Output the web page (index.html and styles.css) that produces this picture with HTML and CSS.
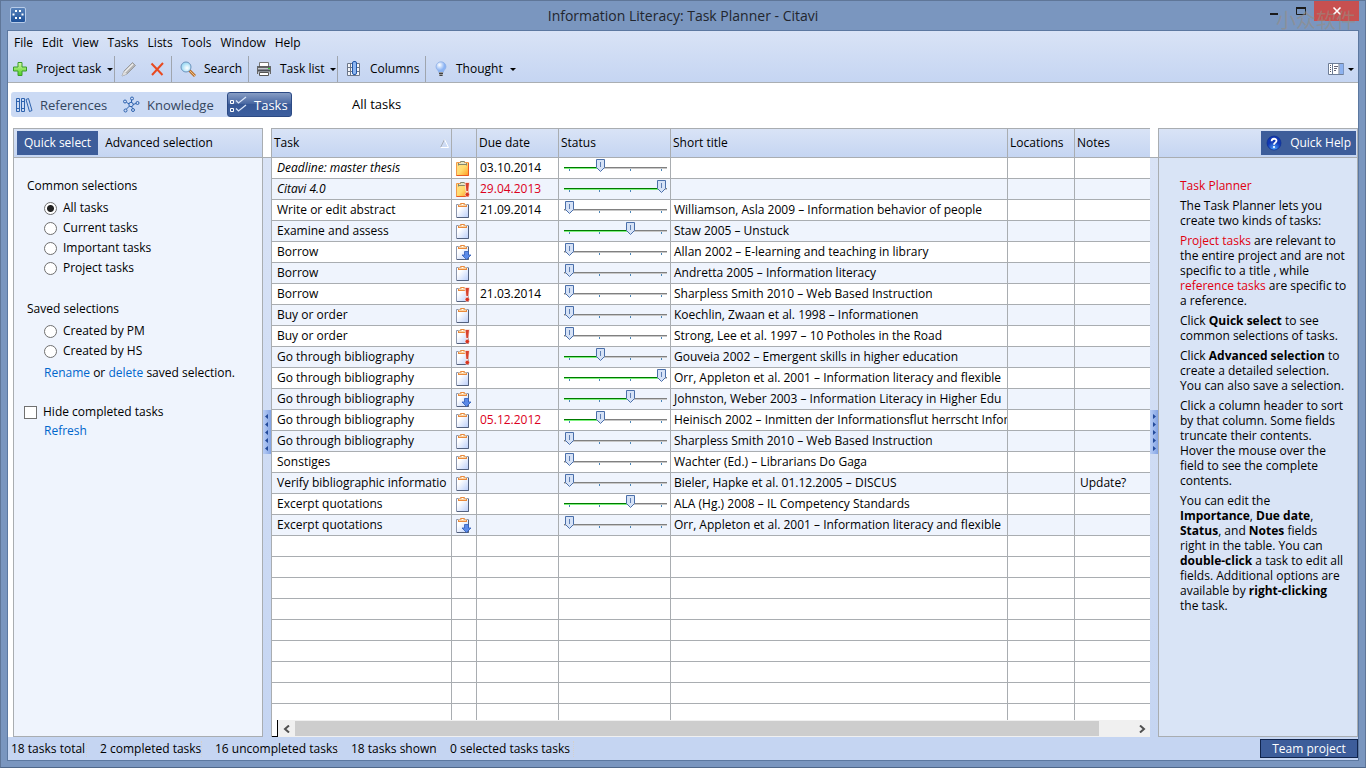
FILE: index.html
```html
<!DOCTYPE html>
<html lang="en">
<head>
<meta charset="utf-8">
<title>Information Literacy: Task Planner - Citavi</title>
<link rel="stylesheet" href="styles.css">
</head>
<body>
<svg class="defs" aria-hidden="true">
  <defs>
    <linearGradient id="paper" x1="0" y1="0" x2="1" y2="1"><stop offset="0.3" stop-color="#fff"/><stop offset="1" stop-color="#b9cdfa"/></linearGradient>
    <linearGradient id="gold" x1="0" y1="0" x2="1" y2="1"><stop offset="0" stop-color="#ffe08a"/><stop offset="0.5" stop-color="#ffdc70"/><stop offset="1" stop-color="#ff9a20"/></linearGradient>
    <linearGradient id="green" x1="0" y1="0" x2="0" y2="1"><stop offset="0" stop-color="#d8f8a8"/><stop offset="1" stop-color="#4cd020"/></linearGradient>
    <radialGradient id="glass" cx="0.6" cy="0.6"><stop offset="0" stop-color="#fff"/><stop offset="1" stop-color="#a4ddf5"/></radialGradient>
    <radialGradient id="bulb" cx="0.35" cy="0.3"><stop offset="0" stop-color="#fff"/><stop offset="1" stop-color="#8cb4f4"/></radialGradient>
    <radialGradient id="ball" cx="0.5" cy="0.9"><stop offset="0" stop-color="#4aa0ff"/><stop offset="1" stop-color="#1238b4"/></radialGradient>
    <linearGradient id="app" x1="0" y1="0" x2="0" y2="1"><stop offset="0" stop-color="#5a84bc"/><stop offset="1" stop-color="#1c4f98"/></linearGradient>
    <g id="i-note">
      <path d="M2.5 2.5h12v13h-12z" fill="url(#paper)" stroke="#8d97ad"/><path d="M14.5 3v12.5H3" fill="none" stroke="#53617e"/>
      <path d="M4 5V2.500h2.500L7 1h3l.5 1.500H13V5z" fill="#fbd3a4"/><path d="M4.500 5V3M12.500 5V3M5 4.500h7M6.500 2.500V1.500h4v1" stroke="#ea8a3c" fill="none"/><path d="M8 2.500h1" stroke="#fff"/>
    </g>
    <g id="i-gold">
      <path d="M2.500 2.500h12v13h-12z" fill="url(#gold)" stroke="#f39a4a"/><path d="M14.500 3v12.500H2.500" fill="none" stroke="#e95a24"/>
      <path d="M4 5V3h2.500L7 1h3l.5 2H13v2z" fill="#e6e4c4"/><path d="M4.500 5.500V3M12.500 5.500V3M5 4.500h7M6.500 2.500V1.500h4v1" stroke="#85866c" fill="none"/>
    </g>
    <g id="i-bang">
      <path d="M11 1.500h4.500l-1 9H12z" fill="#d8412c" stroke="#fff" stroke-width="0.700"/><circle cx="13.300" cy="13.500" r="2.200" fill="#d8341f" stroke="#fff" stroke-width="0.500"/>
    </g>
    <g id="i-down">
      <path d="M10.500 7.500h4V11H17l-4.500 4.500L8 11h2.500z" fill="#5b8ae8" stroke="#2f5cb8" stroke-width="0.800"/>
    </g>
  </defs>
</svg>

<div class="window">
  <header class="titlebar">
    <svg class="app-icon" viewBox="0 0 16 16" aria-hidden="true"><rect x="0.5" y="0.5" width="15" height="15" rx="1.500" fill="url(#app)" stroke="#b7cbe8"/><path d="M5 3h2v2H5zM9 3h2v2H9zM2.500 6.500h2v2h-2zM11.500 6.500h2v2h-2zM5 10h2v2H5zM9 10h2v2H9z" fill="#fff"/></svg>
    <h1 class="title">Information Literacy: Task Planner - Citavi</h1>
    <div class="caption">
      <button class="cap" aria-label="Minimize"><svg viewBox="0 0 12 12"><path d="M2 9h8" stroke="#1b1b1b" stroke-width="2"/></svg></button>
      <button class="cap" aria-label="Maximize"><svg viewBox="0 0 12 12"><path d="M1.500 3v6.500h9V3" fill="none" stroke="#1b1b1b"/><path d="M1 3h10" stroke="#1b1b1b" stroke-width="2"/></svg></button>
      <button class="cap close" aria-label="Close"><svg viewBox="0 0 12 12"><path d="M2.500 2.500l7 7M9.500 2.500l-7 7" stroke="#fff" stroke-width="1.600"/></svg></button>
      <span class="watermark">小众软件</span>
    </div>
  </header>

  <div class="client">
    <div class="bars">
      <nav class="menu">
        <button>File</button><button>Edit</button><button>View</button><button>Tasks</button><button>Lists</button><button>Tools</button><button>Window</button><button>Help</button>
      </nav>
      <div class="toolbar">
        <button class="tool t-project"><svg class="ic" viewBox="0 0 16 16"><path d="M6 1.500h4V6h4.500v4H10v4.500H6V10H1.500V6H6z" fill="url(#green)" stroke="#3a9c28"/></svg><span>Project task</span><i class="caret"></i></button>
        <span class="sep"></span>
        <button class="tool icon-only" aria-label="Edit"><svg class="ic" viewBox="0 0 16 16"><path d="M1 15l2-5L11.500 1.500l3 3L6 13z" fill="#b4b4b4" stroke="#888" stroke-width="0.700"/><path d="M4 11l8-8" stroke="#eee" stroke-width="1.500"/><path d="M1 15l2-5 3 3z" fill="#ddd"/></svg></button>
        <button class="tool icon-only" aria-label="Delete"><svg class="ic" viewBox="0 0 16 16"><path d="M2.500 2.500L13.500 14M14 2L3 14" stroke="#e84a20" stroke-width="2"/></svg></button>
        <span class="sep"></span>
        <button class="tool t-search"><svg class="ic" viewBox="0 0 16 16"><path d="M9 9l6 6" stroke="#b87030" stroke-width="3"/><path d="M9 9l6 6" stroke="#f0c080"/><circle cx="6" cy="6" r="5" fill="url(#glass)" stroke="#6c93bd"/></svg><span>Search</span></button>
        <span class="sep"></span>
        <button class="tool t-list"><svg class="ic" viewBox="0 0 16 16"><path d="M3.500 1.500h9V6h-9z" fill="#fff" stroke="#777"/><path d="M1 6h14v7H1z" fill="#c4c8d0"/><path d="M1 6h14" stroke="#444" stroke-width="1.500"/><path d="M1 9.500h14" stroke="#4a4e56" stroke-width="2"/><path d="M1.500 6v7M14.500 6v7" stroke="#666"/><path d="M3.500 11.500h9v3h-9z" fill="#fff" stroke="#555"/><path d="M12 7.500h2" stroke="#3c3"/></svg><span>Task list</span><i class="caret"></i></button>
        <span class="sep"></span>
        <button class="tool t-columns"><svg class="ic" viewBox="0 0 16 16"><path d="M1.500 2.500h12v12h-12zM1.500 6.500h12M1.500 10.500h12M4.500 2.500v12" fill="#f4f6fa" stroke="#6c7688"/><rect x="6.500" y="0.500" width="4" height="13" rx="1.500" fill="#8eb6f0" stroke="#2258a8"/></svg><span>Columns</span></button>
        <span class="sep"></span>
        <button class="tool t-thought"><svg class="ic" viewBox="0 0 16 16"><path d="M8 .8a5 5 0 0 1 5 5c0 2.500-2.500 3.200-2.800 5.700H5.800C5.500 9 3 8.300 3 5.800a5 5 0 0 1 5-5z" fill="url(#bulb)" stroke="#88aae4" stroke-width="0.700"/><path d="M6 11h4l-.5 4h-3z" fill="#999"/><path d="M6 12.500h4M6.500 14.500h3" stroke="#444"/></svg><span>Thought</span><i class="caret"></i></button>
        <button class="tool t-layout" aria-label="Layout"><svg class="ic" viewBox="0 0 16 16"><path d="M.5 2.500h15v11H.5z" fill="#fff" stroke="#6e7d96"/><path d="M11.500 3h4v10h-4z" fill="#8db2f0"/><path d="M4.500 3v10M11 3v10" stroke="#6e7d96"/><path d="M2.500 4v8" stroke="#556" stroke-dasharray="1 1"/><path d="M6 5.500h4M6 7.500h3M6 9.500h2" stroke="#667"/></svg><i class="caret"></i></button>
      </div>
    </div>

    <div class="switcher">
      <div class="modes">
        <button class="mode m-ref"><svg class="mi" viewBox="0 0 18 18"><path d="M1.500 2.500h3v13h-3zM6.500 2.500h3v13h-3zM11 3.500l2.500-1 3.500 12-2.500 1zM1.500 5.500h3M6.500 5.500h3M1.500 12.500h3M6.500 12.500h3" fill="none" stroke="#2e63ae"/></svg>References</button>
        <button class="mode m-know"><svg class="mi" viewBox="0 0 18 18"><g fill="none" stroke="#2e63ae"><path d="M4.500 6.500l3 1.500M9.500 6V4M11 8.500l3-1M9.500 10.500l1 2M7.500 10l-3 3"/><circle cx="9" cy="8.500" r="2.200"/><circle cx="3" cy="5.500" r="1.500"/><circle cx="10" cy="2.500" r="1.500"/><circle cx="15.500" cy="7" r="1.500"/><circle cx="11" cy="14" r="1.500"/><circle cx="3.500" cy="14.500" r="1.500"/></g></svg>Knowledge</button>
        <button class="mode active"><svg class="mi" viewBox="0 0 18 18"><path d="M1.500 4.500h3v3h-3zM1.500 12.500h3v3h-3z" fill="none" stroke="#fff"/><path d="M7 4.500l2.500 2.500L17 1M7 12.500l2.500 2.500L17 9" fill="none" stroke="#d8e4f8" stroke-width="1.300"/></svg>Tasks</button>
      </div>
      <h2 class="view-name">All tasks</h2>
    </div>

    <main class="work">
      <aside class="panel left">
        <div class="panel-head"><button class="tab on">Quick select</button><button class="tab">Advanced selection</button></div>
        <form class="filters">
          <fieldset>
            <legend>Common selections</legend>
            <label><input type="radio" name="sel" checked>All tasks</label>
            <label><input type="radio" name="sel">Current tasks</label>
            <label><input type="radio" name="sel">Important tasks</label>
            <label><input type="radio" name="sel">Project tasks</label>
          </fieldset>
          <fieldset class="saved">
            <legend>Saved selections</legend>
            <label><input type="radio" name="sel">Created by PM</label>
            <label><input type="radio" name="sel">Created by HS</label>
            <p class="indent"><a href="#">Rename</a> or <a href="#">delete</a> saved selection.</p>
          </fieldset>
          <label class="hide"><input type="checkbox">Hide completed tasks</label>
          <p class="indent"><a href="#">Refresh</a></p>
        </form>
      </aside>
      <div class="splitter"><svg class="grip" viewBox="0 0 8 44"><path d="M5 4v5L2 6.500zM5 12v5L2 14.500zM5 20v5L2 22.500zM5 28v5L2 30.500zM5 36v5L2 38.500z" fill="#234a9a"/></svg></div>
      <section class="grid">
        <div class="grid-view">
          <table>
            <colgroup><col class="c-task"><col class="c-icon"><col class="c-due"><col class="c-status"><col class="c-title"><col class="c-loc"><col class="c-notes"></colgroup>
            <thead><tr><th><div class="sorted">Task<svg viewBox="0 0 9 9"><path d="M.5 8.500L4.500.5" stroke="#a8acb4" fill="none"/><path d="M4.500.5l4 8h-8" stroke="#fff" fill="none"/></svg></div></th><th aria-label="Type"></th><th>Due date</th><th>Status</th><th>Short title</th><th>Locations</th><th>Notes</th></tr></thead>
            <tbody id="rows"></tbody>
          </table>
        </div>
        <div class="hscroll"><span class="corner"></span><button aria-label="Scroll left"><svg viewBox="0 0 8 8"><path d="M6 .5L2 4l4 3.500" fill="none" stroke="#505050" stroke-width="2"/></svg></button><div class="rail"><div class="thumb"></div></div><button aria-label="Scroll right"><svg viewBox="0 0 8 8"><path d="M2 .5L6 4 2 7.500" fill="none" stroke="#505050" stroke-width="2"/></svg></button></div>
      </section>
      <div class="splitter"><svg class="grip" viewBox="0 0 8 44"><path d="M3 4v5L6 6.500zM3 12v5L6 14.500zM3 20v5L6 22.500zM3 28v5L6 30.500zM3 36v5L6 38.500z" fill="#234a9a"/></svg></div>
      <aside class="panel help">
        <div class="panel-head right"><button class="tab on quick"><svg class="ic" viewBox="0 0 16 16"><circle cx="8" cy="8" r="7" fill="url(#ball)" stroke="#0c2e90" stroke-width="0.700"/><path d="M5.600 6.300C5.600 3 10.500 3 10.500 5.800 10.500 7.600 8 7.700 8 9.700" fill="none" stroke="#fff" stroke-width="1.800"/><circle cx="8" cy="12" r="1.100" fill="#fff"/></svg>Quick Help</button></div>
        <div class="help-text">
          <p class="red">Task Planner</p>
          <p>The Task Planner lets you<br>create two kinds of tasks:</p>
          <p><span class="red">Project tasks</span> are relevant to<br>the entire project and are not<br>specific to a title , while<br><span class="red">reference tasks</span> are specific to<br>a reference.</p>
          <p>Click <b>Quick select</b> to see<br>common selections of tasks.</p>
          <p>Click <b>Advanced selection</b> to<br>create a detailed selection.<br>You can also save a selection.</p>
          <p>Click a column header to sort<br>by that column. Some fields<br>truncate their contents.<br>Hover the mouse over the<br>field to see the complete<br>contents.</p>
          <p>You can edit the<br><b>Importance</b>, <b>Due date</b>,<br><b>Status</b>, and <b>Notes</b> fields<br>right in the table. You can<br><b>double-click</b> a task to edit all<br>fields. Additional options are<br>available by <b>right-clicking</b><br>the task.</p>
        </div>
      </aside>
    </main>

    <footer class="status">
      <span class="s1">18 tasks total</span><span class="s2">2 completed tasks</span><span class="s3">16 uncompleted tasks</span><span class="s4">18 tasks shown</span><span class="s5">0 selected tasks tasks</span>
      <button class="team">Team project</button>
    </footer>
  </div>
</div>
<script src="rows.js"></script>
</body>
</html>
```
FILE: rows.js
```js
// [task, icon, due date, progress 0-3, short title, notes, flags]
const tasks = [
  ["Deadline: master thesis", "gold", "03.10.2014", 1, "", "", "i"],
  ["Citavi 4.0", "gold bang", "29.04.2013", 3, "", "", "i late"],
  ["Write or edit abstract", "note", "21.09.2014", 0, "Williamson, Asla 2009 – Information behavior of people"],
  ["Examine and assess", "note", "", 2, "Staw 2005 – Unstuck"],
  ["Borrow", "note down", "", 0, "Allan 2002 – E-learning and teaching in library"],
  ["Borrow", "note", "", 0, "Andretta 2005 – Information literacy"],
  ["Borrow", "note bang", "21.03.2014", 0, "Sharpless Smith 2010 – Web Based Instruction"],
  ["Buy or order", "note", "", 0, "Koechlin, Zwaan et al. 1998 – Informationen"],
  ["Buy or order", "note bang", "", 0, "Strong, Lee et al. 1997 – 10 Potholes in the Road"],
  ["Go through bibliography", "note bang", "", 1, "Gouveia 2002 – Emergent skills in higher education"],
  ["Go through bibliography", "note", "", 3, "Orr, Appleton et al. 2001 – Information literacy and flexible"],
  ["Go through bibliography", "note down", "", 2, "Johnston, Weber 2003 – Information Literacy in Higher Edu"],
  ["Go through bibliography", "note", "05.12.2012", 1, "Heinisch 2002 – Inmitten der Informationsflut herrscht Infor", "", "late"],
  ["Go through bibliography", "note", "", 0, "Sharpless Smith 2010 – Web Based Instruction"],
  ["Sonstiges", "note", "", 0, "Wachter (Ed.) – Librarians Do Gaga"],
  ["Verify bibliographic informatio", "note", "", 0, "Bieler, Hapke et al. 01.12.2005 – DISCUS", "Update?"],
  ["Excerpt quotations", "note", "", 2, "ALA (Hg.) 2008 – IL Competency Standards"],
  ["Excerpt quotations", "note down", "", 0, "Orr, Appleton et al. 2001 – Information literacy and flexible"]
];
const fill = ["0%", "34%", "64%", "94%"];
const emptyRows = 40;
const body = document.getElementById("rows");
let html = "";
for (const [task, icon, due, step, title, notes = "", flags = ""] of tasks) {
  const uses = icon.split(" ").map(n => `<use href="#i-${n}"/>`).join("");
  html += `<tr class="filled ${flags}"><td>${task}</td><td class="icon"><svg viewBox="0 0 18 16">${uses}</svg></td><td class="due">${due}</td>` +
    `<td class="prog"><div class="slider"><div class="done" style="width:${fill[step]}"></div>` +
    `<input type="range" min="0" max="3" value="${step}" aria-label="Status of ${task}"></div></td>` +
    `<td class="short">${title}</td><td></td><td>${notes}</td></tr>`;
}
html += `<tr>${"<td></td>".repeat(7)}</tr>`.repeat(emptyRows);
body.innerHTML = html;
```
FILE: styles.css
```css
* { box-sizing: border-box; }
body { margin: 0; font-family: "Open Sans", "Noto Sans", sans-serif; font-size: 12px; line-height: 16px; color: #000; }
button { font: inherit; color: inherit; background: none; border: 0; padding: 0; white-space: nowrap; }
h1, h2, p, fieldset, legend { margin: 0; padding: 0; border: 0; font-weight: normal; }
a { color: #0066cc; text-decoration: none; }
.defs { position: absolute; width: 0; height: 0; }

.window { height: 100vh; display: flex; flex-direction: column; padding: 0 6px 6px; background: #7a96bf; border: 1px solid #5f7698; border-bottom-color: #4f6789; }
.titlebar { position: relative; height: 29px; flex: none; display: flex; align-items: center; justify-content: center; }
.app-icon { position: absolute; left: 3px; top: 6px; width: 16px; height: 16px; }
.title { font-size: 14px; line-height: 20px; color: #22262e; }
.caption { position: absolute; right: 0; top: 0; display: flex; }
.cap { width: 27px; height: 20px; display: flex; align-items: center; justify-content: center; }
.cap svg { width: 12px; height: 12px; }
.close { width: 45px; background: #c75050; }
.watermark { position: absolute; right: 3px; top: 7px; font: 20px/24px "Noto Sans CJK SC", sans-serif; color: rgba(150, 140, 130, 0.6); }

.client { flex: 1; min-height: 0; display: flex; flex-direction: column; background: #fff; border: 1px solid #5c78a0; }
.bars { background: linear-gradient(#d9e3f6, #c5d5f2); border-bottom: 1px solid #aaaeb2; height: 52px; flex: none; display: flex; flex-direction: column; justify-content: space-between; }
.menu { display: flex; gap: 9px; padding: 4px 6px 0; }
.toolbar { display: flex; height: 26px; }
.tool { display: flex; align-items: center; flex: none; }
.ic { width: 16px; height: 16px; flex: none; }
.sep { width: 1px; background: #9fa5ae; }
.caret { border: 3px solid transparent; border-top-color: #000; border-bottom: 0; margin-left: auto; }

.t-project { width: 106px; padding: 0 3px 0 4px; gap: 8px; }
.t-project .caret, .t-list .caret { margin-left: -2px; }
.icon-only { width: 28px; justify-content: center; }
.t-search { width: 76px; padding-left: 8px; gap: 8px; }
.t-list { width: 88px; padding: 0 3px 0 7px; gap: 8px; }
.t-columns { width: 87px; padding-left: 8px; gap: 8px; }
.t-thought { width: 94px; padding: 0 6px 0 7px; gap: 7px; }
.t-layout { margin-left: auto; width: 30px; padding-right: 4px; }

.switcher { height: 45px; flex: none; display: flex; align-items: flex-start; padding: 9px 0 0 3px; gap: 60px; }
.modes { display: flex; height: 25px; background: #cbdaf4; border-radius: 3px; }
.mode { display: flex; align-items: center; gap: 7px; padding-left: 4px; font-size: 13px; color: #34465f; }
.m-ref { width: 107px; }
.m-know { width: 109px; }
.mi { width: 18px; height: 18px; }
.mode.active { width: 65px; color: #fff; background: linear-gradient(#879dc4, #4b69a3 45%, #365796 50%, #3d5f9e); border: 1px solid #2c4a84; border-radius: 3px; padding-left: 1px; }
.view-name { font-size: 13px; line-height: 25px; }

.work { flex: 1; min-height: 0; display: grid; grid-template-columns: 250px 8px minmax(0, 1fr) 8px 200px; padding-left: 5px; }
.panel { border: 1px solid #a9adb1; background: #eff4fd; display: flex; flex-direction: column; min-height: 0; overflow: hidden; }
.panel-head { height: 29px; flex: none; display: flex; padding: 2px 3px; background: linear-gradient(#d9e3f6, #c5d5f2); border-bottom: 1px solid #a9adb1; }
.panel-head.right { justify-content: flex-end; padding-right: 1px; }
.tab { padding: 0 7px; }
.tab.on { background: #3d5d9a; color: #fff; }
.tab.quick { display: flex; align-items: center; gap: 8px; padding: 0 5px; }
.filters { padding: 20px 8px 0 10px; }
.filters fieldset { padding: 0 0 0 20px; margin-bottom: 23px; }
.filters .saved { margin-bottom: 17px; }
.filters legend { margin-left: -17px; padding: 0 0 4px; }
.filters label { display: flex; align-items: center; gap: 6px; height: 20px; }
input[type="radio"], input[type="checkbox"] { appearance: none; width: 13px; height: 13px; margin: 0; border: 1px solid #707070; background: #fff; flex: none; }
input[type="radio"] { border-radius: 50%; }
input[type="radio"]:checked { background: radial-gradient(circle, #222 3px, #fff 4px); }
.indent { padding: 4px 0; }
.filters > .indent { padding: 1px 0 0 20px; }

.splitter { background: linear-gradient(#d9e3f6, #c5d5f2); margin-top: 29px; border-top: 1px solid #a9adb1; }
.grip { display: block; width: 8px; height: 44px; margin-top: 252px; background: linear-gradient(90deg, #b8cdf5, #84a4e4); }

.grid { display: flex; flex-direction: column; min-height: 0; border-top: 1px solid #a9adb1; border-left: 1px solid #a9adb1; background: #fff; }
.grid-view { flex: 1; min-height: 0; overflow: hidden; }
table { width: 100%; table-layout: fixed; border-collapse: separate; border-spacing: 0; }
.c-task { width: 180px; } .c-icon { width: 25px; } .c-due { width: 82px; } .c-status { width: 112px; } .c-loc { width: 67px; } .c-notes { width: 75px; }
th, td { border-right: 1px solid #a9adb1; border-bottom: 1px solid #a9adb1; overflow: hidden; white-space: nowrap; text-align: left; font-weight: normal; }
th:last-child, td:last-child { border-right: 0; }
th { height: 29px; padding: 0 2px; background: linear-gradient(#d9e3f6, #c5d5f2); }
td { height: 21px; padding: 0 5px; }
.sorted { display: flex; justify-content: space-between; align-items: center; }
.sorted svg { width: 9px; height: 9px; }
tr.filled:nth-child(even) { background: #eff4fd; }
.i td:first-child { font-style: italic; }
.late .due { color: #dc0020; }
td.icon { padding: 0 0 0 2px; }
td.icon svg { display: block; width: 18px; height: 16px; }
td.due { padding: 0 3px; }
td.short { padding: 0 0 0 3px; }
.slider { position: relative; height: 20px; width: 103px; background: linear-gradient(#808080 50%, #c8c8c8 50%) 0 9px / 100% 2px no-repeat; }
.slider::before { content: ""; position: absolute; inset: 11px 0 7px 5px; background: linear-gradient(#4a86b8, #4a86b8) 0 0 / 1px 2px no-repeat, linear-gradient(#4a86b8, #4a86b8) 30px 0 / 1px 2px no-repeat, linear-gradient(#4a86b8, #4a86b8) 61px 0 / 1px 2px no-repeat, linear-gradient(#4a86b8, #4a86b8) 92px 0 / 1px 2px no-repeat; }
.done { position: absolute; left: 0; top: 9px; height: 2px; background: linear-gradient(#007a00 50%, #7df07d 50%); }
.slider input { position: absolute; left: 1px; top: 1px; width: 101px; height: 13px; margin: 0; appearance: none; background: none; }
.slider input::-webkit-slider-thumb { appearance: none; width: 9px; height: 13px; background: url("data:image/svg+xml,%3Csvg xmlns='http://www.w3.org/2000/svg' viewBox='0 0 9 13'%3E%3Cpath d='M.5.5h8v8l-4 4-4-4z' fill='%23d6e2f6' stroke='%234a6faa'/%3E%3Cpath d='M4.5 3v5' stroke='%235f7fb4'/%3E%3C/svg%3E") no-repeat; }

.hscroll { height: 17px; flex: none; display: flex; background: #f0f0f0; }
.corner { width: 6px; background: #fff; border-right: 1px solid #000; border-bottom: 1px solid #000; }
.hscroll button { width: 17px; display: flex; align-items: center; justify-content: center; }
.hscroll svg { width: 8px; height: 8px; }
.rail { flex: 1; }
.rail .thumb { height: 15px; margin-top: 1px; width: 96%; background: #cdcdcd; }

.help { background: #d9e4f6; }
.help-text { padding: 20px 8px 0 21px; line-height: 15px; white-space: nowrap; }
.help-text p { margin-bottom: 5px; }
.red { color: #e00010; }

.status { height: 23px; flex: none; display: flex; align-items: center; background: #c5d5f2; padding-left: 3px; }
.status span { padding-left: 13px; border-left: 1px dotted #d4d0cc; white-space: nowrap; }
.status .s1 { width: 75px; padding-left: 0; border-left: 0; }
.s2 { width: 115px; } .s3 { width: 136px; } .s4 { width: 99px; } .s5 { padding-right: 3px; border-right: 1px dotted #d4d0cc; }
.team { margin-left: auto; width: 98px; height: 19px; background: #3d5d9a; color: #fff; border: 1px solid #10244c; }
```
